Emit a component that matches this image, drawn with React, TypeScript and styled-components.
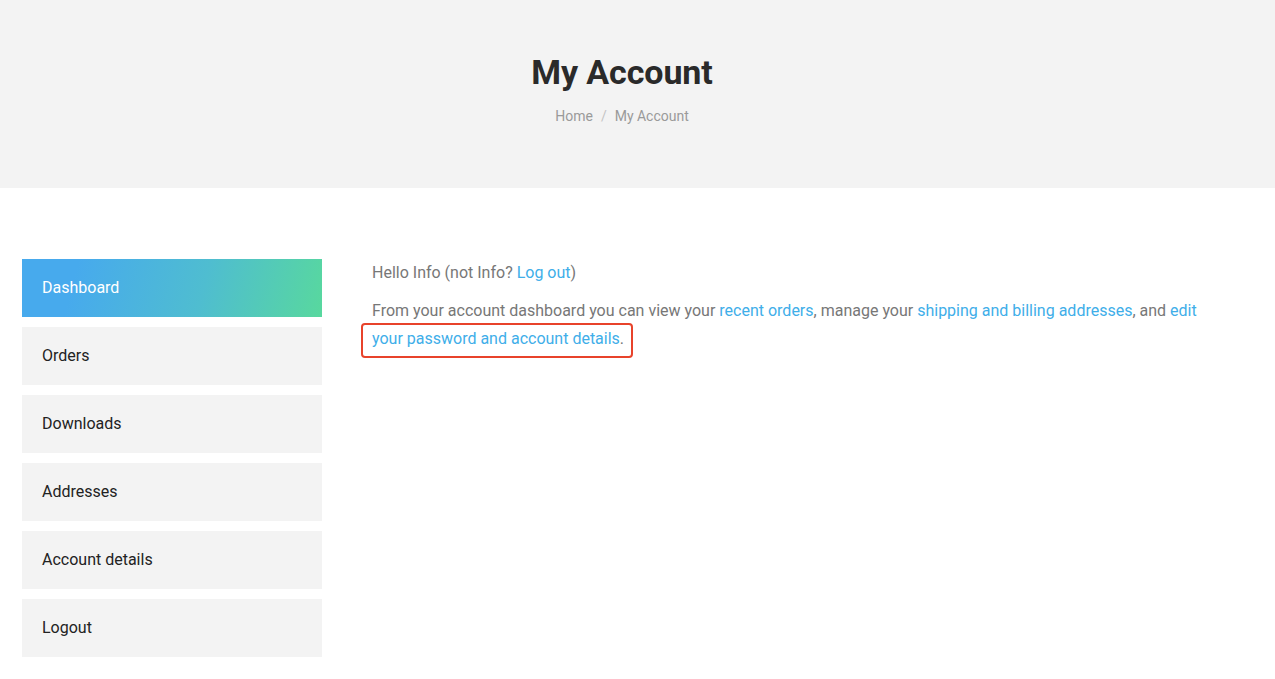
import React from "react";
import styled, { createGlobalStyle } from "styled-components";

const GlobalStyle = createGlobalStyle`
  html, body { margin: 0; padding: 0; background: #ffffff; }
  body { font-family: Roboto, "Liberation Sans", Arial, sans-serif; }
  * { box-sizing: border-box; }
`;

const Page = styled.div`
  width: 1275px;
  min-height: 679px;
  background: #fff;
`;

const Hero = styled.header`
  height: 188px;
  background: #f3f3f3;
  display: flex;
  flex-direction: column;
  align-items: center;
  padding: 50px 31px 0 0;
`;

const Title = styled.h1`
  margin: 0;
  font-size: 34px;
  line-height: 44px;
  font-weight: 700;
  color: #2a2a2a;
  letter-spacing: -0.1px;
`;

const Crumbs = styled.nav`
  margin-top: 12px;
  display: flex;
  gap: 8px;
  font-size: 14px;
  line-height: 20px;
  color: #9a9a9a;
`;

const Sep = styled.span`
  color: #c4c4c4;
`;

const Main = styled.main`
  display: flex;
  gap: 50px;
  padding: 71px 22px 0 22px;
`;

const Side = styled.ul`
  list-style: none;
  margin: 0;
  padding: 0;
  width: 300px;
  flex: none;
  display: flex;
  flex-direction: column;
  gap: 10px;
`;

const Item = styled.li<{ $active?: boolean }>`
  height: 58px;
  display: flex;
  align-items: center;
  padding: 0 0 2px 20px;
  font-size: 16px;
  color: ${(p) => (p.$active ? "#ffffff" : "#222222")};
  background: ${(p) =>
    p.$active ? "linear-gradient(105deg, #47aaed 18%, #4fbdd0 60%, #58d89e 100%)" : "#f3f3f3"};
`;

const Content = styled.section`
  flex: 1;
  font-size: 16px;
  line-height: 28px;
  color: #777777;
`;

const Para = styled.p`
  margin: 0 0 10px 0;
`;

const Link = styled.a`
  color: #40aee9;
  text-decoration: none;
`;

const Highlight = styled.span`
  position: relative;
  display: inline-block;
  &::after {
    content: "";
    position: absolute;
    left: -11px;
    right: -9px;
    top: -2px;
    bottom: -5px;
    border: 2.5px solid #e8432b;
    border-radius: 4px;
    pointer-events: none;
  }
`;

const items = ["Dashboard", "Orders", "Downloads", "Addresses", "Account details", "Logout"];

export default function App() {
  return (
    <Page>
      <GlobalStyle />
      <Hero>
        <Title>My Account</Title>
        <Crumbs>
          <span>Home</span>
          <Sep>/</Sep>
          <span>My Account</span>
        </Crumbs>
      </Hero>
      <Main>
        <Side>
          {items.map((t, i) => (
            <Item key={t} $active={i === 0}>
              {t}
            </Item>
          ))}
        </Side>
        <Content>
          <Para>
            Hello Info (not Info? <Link href="#">Log out</Link>)
          </Para>
          <Para>
            From your account dashboard you can view your <Link href="#">recent orders</Link>, manage your{" "}
            <Link href="#">shipping and billing addresses</Link>, and <Link href="#">edit</Link>{" "}
            <Highlight>
              <Link href="#">your password and account details</Link>.
            </Highlight>
          </Para>
        </Content>
      </Main>
    </Page>
  );
}
